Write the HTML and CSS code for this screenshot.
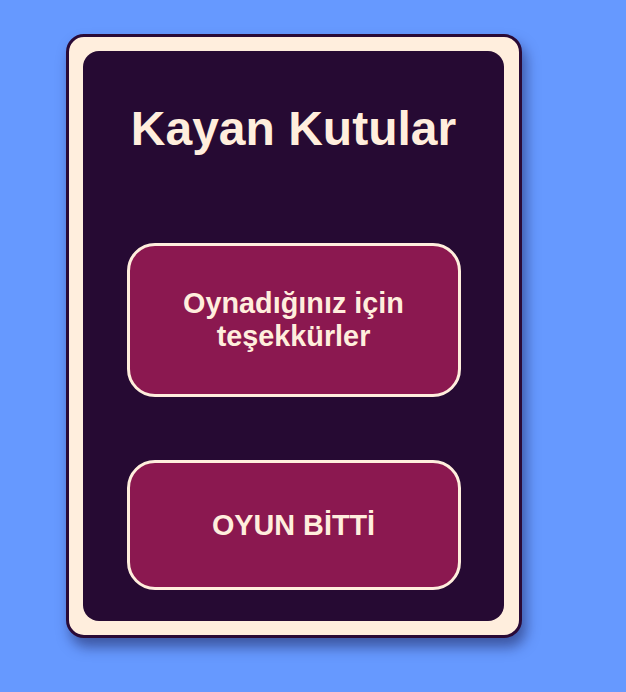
FILE: index.html
```html
<!DOCTYPE html>
<html lang="tr">
<head>
<meta charset="utf-8">
<title>Kayan Kutular</title>
<link rel="stylesheet" href="styles.css">
</head>
<body>
<div class="card">
  <div class="panel">
    <h1 class="title">Kayan Kutular</h1>
    <div class="box box-thanks">Oynadığınız için<br>teşekkürler</div>
    <div class="box box-over">OYUN BİTTİ</div>
  </div>
</div>
</body>
</html>
```
FILE: styles.css
```css
html, body {
  margin: 0;
  height: 100%;
}
body {
  background: #6699ff;
  font-family: "Liberation Sans", Arial, sans-serif;
  padding: 34px 0 0 66px;
  box-sizing: border-box;
}
.card {
  width: 456px;
  box-sizing: border-box;
  background: #ffeedd;
  border: 3px solid #2a0a36;
  border-radius: 18px;
  padding: 14px 15px 14px 14px;
  box-shadow: 4px 9px 13px rgba(20, 20, 70, 0.5);
}
.panel {
  height: 570px;
  background: #260a33;
  border-radius: 16px;
  display: flex;
  flex-direction: column;
  align-items: center;
  padding-top: 50px;
  box-sizing: border-box;
}
.title {
  margin: 0;
  font-size: 48px;
  line-height: 55px;
  font-weight: bold;
  color: #ffeedd;
}
.box {
  width: 334px;
  box-sizing: border-box;
  border: 3px solid #ffeedd;
  border-radius: 28px;
  background: #8b1850;
  color: #ffeedd;
  font-weight: bold;
  font-size: 28.8px;
  line-height: 33px;
  display: flex;
  align-items: center;
  justify-content: center;
  text-align: center;
}
.box-thanks {
  margin-top: 87px;
  height: 154px;
}
.box-over {
  margin-top: 63px;
  height: 130px;
}
```
